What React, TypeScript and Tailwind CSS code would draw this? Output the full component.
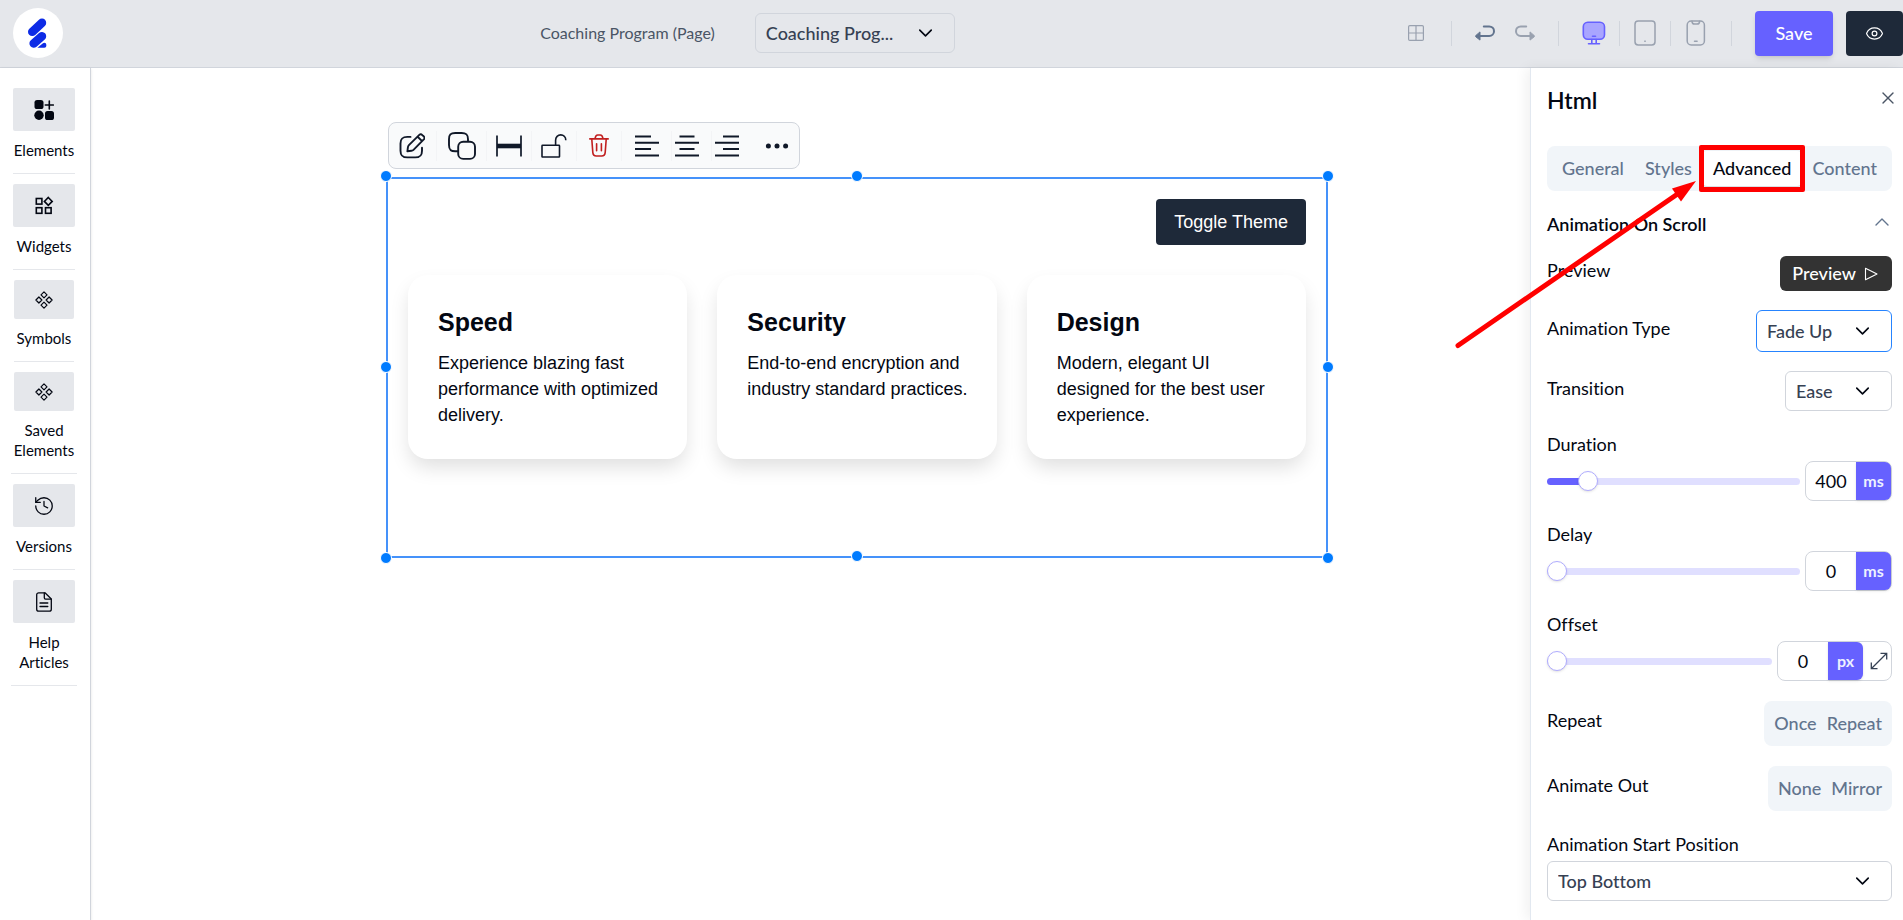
import React, { useState } from 'react';
import { ChevronDown, ChevronUp, X, Eye, History } from 'lucide-react';

type IconProps = { className?: string };

function Logo() {
  return (
    <svg viewBox="0 0 50 50" className="size-[50px]" aria-hidden="true">
      <circle cx="25" cy="25" r="25" fill="#fff" />
      <g stroke="#0d2be6" strokeWidth="8.6" strokeLinecap="round">
        <path d="M19.3 23.8 28.9 14.8" />
        <path d="M20.7 35.4 28.9 28.2" />
      </g>
      <path d="M24.4 39.7 29.6 35.4c1.8-1.3 3.7-.4 3.7 1.5v.8c0 1.2-.8 2-2 2z" fill="#0d2be6" />
    </svg>
  );
}

function ElementsIcon() {
  return (
    <svg viewBox="0 0 20 20" className="size-5" fill="currentColor" aria-hidden="true">
      <rect x="0.5" y="0" width="9" height="9" rx="2.6" />
      <circle cx="5" cy="15.2" r="4.7" />
      <rect x="11" y="11" width="9" height="9" rx="2.6" />
      <path d="M15.3 1v8M11.3 5h8" stroke="currentColor" strokeWidth="1.6" strokeLinecap="round" />
    </svg>
  );
}

function WidgetsIcon() {
  return (
    <svg viewBox="0 0 20 20" className="size-5" fill="none" stroke="currentColor" strokeWidth="1.6" aria-hidden="true">
      <rect x="2.3" y="2.5" width="5.6" height="5.6" />
      <rect x="2.3" y="11.7" width="5.6" height="5.6" />
      <rect x="11.5" y="11.7" width="5.6" height="5.6" />
      <path d="M14.3 1.5 18.2 5.4 14.3 9.3 10.4 5.4z" />
    </svg>
  );
}

function SymbolsIcon() {
  return (
    <svg viewBox="0 0 18 18" className="size-[18px]" fill="none" stroke="currentColor" strokeWidth="1.2" strokeLinejoin="round" aria-hidden="true">
      <path d="M9 .9 12 3.9 9 6.9 6 3.9zM9 11.1 12 14.1 9 17.1 6 14.1zM3.9 6 6.9 9 3.9 12 .9 9zM14.1 6 17.1 9 14.1 12 11.1 9z" />
    </svg>
  );
}

function VersionsIcon() {
  return <History className="size-[22px]" strokeWidth={1.4} aria-hidden="true" />;
}

function ArticleIcon() {
  return (
    <svg viewBox="0 0 18 20" className="h-5 w-[18px]" fill="none" stroke="currentColor" strokeWidth="1.3" strokeLinejoin="round" strokeLinecap="round" aria-hidden="true">
      <path d="M10 .8H3.7a2 2 0 0 0-2 2v14.4a2 2 0 0 0 2 2h10.6a2 2 0 0 0 2-2V7z" />
      <path d="M9.3 1v4.8a1.3 1.3 0 0 0 1.3 1.3h5.5M5 11h7.8M5 14.5h7.8" />
    </svg>
  );
}

function EditIcon() {
  return (
    <svg viewBox="0 0 26 26" className="size-[26px]" fill="none" stroke="currentColor" strokeWidth="1.9" strokeLinejoin="round" strokeLinecap="round" aria-hidden="true">
      <path d="M11.5 3.9H8.3C3.5 3.9 1.5 5.5 1.5 10.5v7.2c0 5 2 6.7 6.8 6.7h7.9c4.8 0 6.8-1.7 6.8-6.7v-3" />
      <path d="M20.3 1.9 9.9 12.2c-.5.5-.9 1.4-1 2.1L8.4 18.3l4-.5c.7-.1 1.6-.5 2.1-1L24.8 6.4c1.8-1.8 0-2.9-1.2-4.1s-2-1.7-3.3-.4zM18.6 3.7l4.5 4.4" />
    </svg>
  );
}

function CopyIcon() {
  return (
    <svg viewBox="0 0 28 28" className="size-7" fill="none" stroke="currentColor" strokeWidth="1.9" aria-hidden="true">
      <path d="M10.2 19.3H7.3C2.5 19.3 1 17.7 1 12.9V7.3C1 2.5 2.5 1 7.3 1h6.3C18.4 1 20 2.5 20 7.3v2.4" />
      <rect x="10.2" y="9.8" width="16.8" height="17.1" rx="5" />
    </svg>
  );
}

function WidthIcon() {
  return (
    <svg viewBox="0 0 26 22" className="h-[22px] w-[26px]" fill="none" stroke="currentColor" aria-hidden="true">
      <path d="M1 .5v21M25 .5v21" strokeWidth="1.7" />
      <path d="M1 11h24" strokeWidth="4.6" />
    </svg>
  );
}

function UnlockIcon() {
  return (
    <svg viewBox="0 0 26 24" className="h-6 w-[26px]" fill="none" stroke="currentColor" strokeWidth="1.6" aria-hidden="true">
      <rect x="1" y="11.3" width="17.5" height="11.7" rx=".6" />
      <path d="M14.6 11.3V6.2c0-3.1 2.3-5.3 5.1-5.3s5.1 2.2 5.1 5.3" />
    </svg>
  );
}

function TrashIcon() {
  return (
    <svg viewBox="0 0 20 23" className="h-[23px] w-5 text-[#c11f1f]" fill="none" stroke="currentColor" strokeWidth="1.6" strokeLinecap="round" aria-hidden="true">
      <path d="M.8 4.9h18.4M2.8 5.2l1 13.2c.2 2.3 1 3.6 3.5 3.6h5.4c2.5 0 3.3-1.3 3.5-3.6l1-13.2M6 4.6c.4-2.3.9-3.6 2.7-3.6h2.6c1.8 0 2.3 1.3 2.7 3.6M7.6 9.8v7M12.4 9.8v7" />
    </svg>
  );
}

function AlignIcon({ d }: { d: string }) {
  return (
    <svg viewBox="0 0 24 22" className="h-[22px] w-6" fill="none" stroke="currentColor" strokeWidth="2" aria-hidden="true">
      <path d={d} />
    </svg>
  );
}

function MoreIcon() {
  return (
    <svg viewBox="0 0 24 6" className="h-1.5 w-6" fill="currentColor" aria-hidden="true">
      <circle cx="3.4" cy="3" r="2.5" />
      <circle cx="12" cy="3" r="2.5" />
      <circle cx="20.6" cy="3" r="2.5" />
    </svg>
  );
}

function GridIcon() {
  return (
    <svg viewBox="0 0 16 16" className="size-4" fill="none" stroke="currentColor" strokeWidth="1.2" aria-hidden="true">
      <rect x=".6" y=".6" width="14.8" height="14.8" rx="1.2" />
      <path d="M8 .6v14.8M.6 8h14.8" />
    </svg>
  );
}

function UndoIcon({ className = '' }: IconProps) {
  return (
    <svg viewBox="0 0 20 17" className={'h-[17px] w-5 ' + className} fill="none" stroke="currentColor" strokeWidth="2" strokeLinecap="round" aria-hidden="true">
      <path d="M8.8 1.5h5.4c2.7 0 4.8 2 4.8 4.7s-2.1 4.8-4.8 4.8H5" />
      <path d="M5 7.3v7.8L.8 11.8c-.5-.4-.5-.9 0-1.3z" fill="currentColor" strokeWidth="1" strokeLinejoin="round" />
    </svg>
  );
}

function MonitorIcon() {
  return (
    <svg viewBox="0 0 24 24" className="size-6" fill="none" stroke="#6661ff" strokeWidth="1.6" strokeLinecap="round" aria-hidden="true">
      <rect x="1.3" y="1.3" width="21.2" height="17" rx="4.5" fill="#a9a5ff" />
      <path d="M10.5 15.2h3M9.8 18.5v4M14.2 18.5v4M6.5 22.7h11" />
    </svg>
  );
}

function TabletIcon() {
  return (
    <svg viewBox="0 0 22 26" className="h-[26px] w-[22px]" fill="none" stroke="currentColor" strokeWidth="1.5" aria-hidden="true">
      <rect x="1" y="1" width="20" height="24" rx="3.2" />
      <path d="M11 20.5v1.5" />
    </svg>
  );
}

function PhoneIcon() {
  return (
    <svg viewBox="0 0 20 26" className="h-[26px] w-5" fill="none" stroke="currentColor" strokeWidth="1.5" strokeLinecap="round" aria-hidden="true">
      <rect x="1.2" y="1" width="17.2" height="24" rx="4" />
      <path d="M6 1.2c0 2.2 1 2.9 2.5 2.9h2.6c1.5 0 2.5-.7 2.5-2.9M8.5 21.2h2.6" />
    </svg>
  );
}

function PlayIcon() {
  return (
    <svg viewBox="0 0 14 14" className="size-3.5" fill="none" stroke="currentColor" strokeWidth="1.1" strokeLinejoin="round" aria-hidden="true">
      <path d="M1.5 1.2v11.6L13 7z" />
    </svg>
  );
}

function ExpandIcon() {
  return (
    <svg viewBox="0 0 18 18" className="size-[18px]" fill="none" stroke="currentColor" strokeWidth="1.3" aria-hidden="true">
      <path d="M1.5 16.5l15-15M10.5 1.3h6.2v6.2M7.5 16.7H1.3v-6.2" />
    </svg>
  );
}

const navItems = [
  { label: 'Elements', icon: <ElementsIcon />, size: 'h-[43px] px-[21px]' },
  { label: 'Widgets', icon: <WidgetsIcon />, size: 'h-[43px] px-[21px]' },
  { label: 'Symbols', icon: <SymbolsIcon />, size: 'h-[39px] px-[21px]' },
  { label: 'Saved Elements', icon: <SymbolsIcon />, size: 'h-[39px] px-[21px]' },
  { label: 'Versions', icon: <VersionsIcon />, size: 'h-[43px] px-5' },
  { label: 'Help Articles', icon: <ArticleIcon />, size: 'h-[43px] px-[22px]' },
];

function Sidebar() {
  return (
    <nav className="flex w-[91px] shrink-0 flex-col items-center gap-2.5 border-r border-gray-300 pt-5 pr-0.5 shadow-sm">
      {navItems.map((item) => (
        <div key={item.label} className="flex max-w-[66px] flex-col items-center border-b border-gray-200 pb-[13px]">
          <button type="button" className="flex flex-col items-center gap-[9px]">
            <span className={'flex items-center rounded-xs bg-gray-200 ' + item.size}>{item.icon}</span>
            <span className="text-center text-[15px] leading-5">{item.label}</span>
          </button>
        </div>
      ))}
    </nav>
  );
}

function Divider() {
  return <span className="h-[25px] w-px bg-gray-300" />;
}

type SelectBoxProps = { id: string; value: string; className?: string; wrap?: string };

function SelectBox({ id, value, className = '', wrap = '' }: SelectBoxProps) {
  return (
    <div className={'relative ' + wrap}>
      <select
        id={id}
        defaultValue={value}
        className={'block w-full appearance-none rounded-md border bg-transparent pr-[58px] pl-2.5 text-[18px] font-medium text-gray-700 outline-none ' + className}
      >
        <option>{value}</option>
      </select>
      <ChevronDown className="pointer-events-none absolute top-1/2 right-[18px] size-[23px] -translate-y-1/2" strokeWidth={1.7} aria-hidden="true" />
    </div>
  );
}

function Header() {
  return (
    <header className="flex h-[68px] shrink-0 items-center border-b border-gray-300 bg-gray-200 pb-px pl-[13px]">
      <a href="#home" aria-label="Home">
        <Logo />
      </a>
      <div className="mx-auto flex items-center gap-10 pl-6">
        <label htmlFor="page" className="text-base text-gray-600">
          Coaching Program (Page)
        </label>
        <SelectBox id="page" value="Coaching Prog..." wrap="w-[200px]" className="h-10 border-gray-300" />
      </div>
      <div className="flex items-center text-gray-400">
        <button type="button" aria-label="Grid" className="mr-[27px]">
          <GridIcon />
        </button>
        <Divider />
        <button type="button" aria-label="Undo" className="mr-5 ml-[23px] text-slate-500">
          <UndoIcon />
        </button>
        <button type="button" aria-label="Redo" className="mr-[23px]">
          <UndoIcon className="-scale-x-100" />
        </button>
        <Divider />
        <button type="button" aria-label="Desktop" className="mr-[13px] ml-[23px]">
          <MonitorIcon />
        </button>
        <Divider />
        <button type="button" aria-label="Tablet" className="mx-3.5">
          <TabletIcon />
        </button>
        <Divider />
        <button type="button" aria-label="Phone" className="mr-[25px] ml-[15px]">
          <PhoneIcon />
        </button>
        <Divider />
        <button type="button" className="ml-[23px] h-[45px] w-[78px] rounded-sm bg-[#6661ff] text-[18px] font-medium text-white shadow-md">
          Save
        </button>
        <button type="button" aria-label="Preview page" className="ml-[13px] flex h-[45px] w-[57px] items-center justify-center rounded-sm bg-gray-800 text-white">
          <Eye className="size-[19px]" strokeWidth={1.5} />
        </button>
      </div>
    </header>
  );
}

const tools = [
  { label: 'Edit', icon: <EditIcon />, cell: 'w-12 border-r pr-0.5' },
  { label: 'Duplicate', icon: <CopyIcon />, cell: 'w-[50px] border-r' },
  { label: 'Full width', icon: <WidthIcon />, cell: 'w-[45px] border-r' },
  { label: 'Unlock', icon: <UnlockIcon />, cell: 'w-[45px] border-r' },
  { label: 'Delete', icon: <TrashIcon />, cell: 'w-[45px] border-r' },
  { label: 'Align left', icon: <AlignIcon d="M0 1.5h16M0 7.8h24M0 14.1h16M0 20.4h24" />, cell: 'w-[50px] border-r' },
  { label: 'Align center', icon: <AlignIcon d="M4.5 1.5h15M0 7.8h24M4.5 14.1h15M0 20.4h24" />, cell: 'w-10 border-r pr-2.5' },
  { label: 'Align right', icon: <AlignIcon d="M8 1.5h16M0 7.8h24M8 14.1h16M0 20.4h24" />, cell: 'w-8 pr-0.5' },
  { label: 'More', icon: <MoreIcon />, cell: 'w-[55px] pl-2.5' },
];

const handles = [
  '-top-[9px] -left-2',
  '-top-[9px] left-1/2 -ml-1.5',
  '-top-[9px] -right-2',
  'top-1/2 -mt-[7px] -left-2',
  'top-1/2 -mt-[7px] -right-2',
  '-bottom-2 -left-2',
  '-bottom-1.5 left-1/2 -ml-1.5',
  '-bottom-2 -right-2',
];

const cards = [
  { title: 'Speed', text: 'Experience blazing fast performance with optimized delivery.' },
  { title: 'Security', text: 'End-to-end encryption and industry standard practices.' },
  { title: 'Design', text: 'Modern, elegant UI designed for the best user experience.' },
];

function Canvas() {
  return (
    <main className="min-w-0 flex-1 pt-[54px] pr-[202px] pl-[295px]">
      <div className="ml-0.5 flex h-[47px] w-fit items-center rounded-lg border border-gray-300 bg-gray-50 text-gray-900">
        {tools.map((t) => (
          <button key={t.label} type="button" aria-label={t.label} className={'flex h-[30px] items-center justify-center border-gray-100 ' + t.cell}>
            {t.icon}
          </button>
        ))}
      </div>
      <section className="relative mt-2 border-2 border-[#4592fa] px-5 pt-5 pb-[97px] font-['Liberation_Sans',Arial,sans-serif] text-[18px]">
        {handles.map((h) => (
          <span key={h} className={'absolute size-3 rounded-full border border-white bg-[#007bff] ' + h} />
        ))}
        <div className="flex justify-end">
          <button type="button" className="h-[46px] rounded-sm bg-gray-800 px-[18px] text-white">
            Toggle Theme
          </button>
        </div>
        <div className="mt-[30px] grid grid-cols-3 gap-[30px]">
          {cards.map((c) => (
            <article key={c.title} className="rounded-[20px] bg-white pt-[30px] pr-6 pb-[31px] pl-[30px] shadow-[0_10px_20px_-2px_rgba(0,0,0,0.13)]">
              <h3 className="mb-2.5 text-[25px] leading-[35px] font-bold">{c.title}</h3>
              <p className="leading-[26px]">{c.text}</p>
            </article>
          ))}
        </div>
      </section>
    </main>
  );
}

function TabMarker() {
  return (
    <>
      <span className="pointer-events-none absolute -inset-x-1 -inset-y-1.5 rounded-xs border-[5px] border-[#ff0000]" />
      <svg viewBox="0 0 250 180" className="pointer-events-none absolute top-6 -left-[250px] h-[180px] w-[250px]" aria-hidden="true">
        <path d="M5 170.5 226 18" stroke="#ff0000" strokeWidth="5" strokeLinecap="round" />
        <path d="M243 6 219 13.5 222 18 228 26.5z" fill="#ff0000" />
      </svg>
    </>
  );
}

type SliderRowProps = { id: string; label: string; unit: string; initial: number; max: number; expandable?: boolean };

function SliderRow({ id, label, unit, initial, max, expandable }: SliderRowProps) {
  const [value, setValue] = useState(initial);
  const share = value / max;
  const stop = `calc(${share * 100}% + ${10 - share * 20}px)`;
  return (
    <div className="mt-5">
      <label htmlFor={id} className="block h-[30px] leading-[26px]">
        {label}
      </label>
      <div className="flex items-center gap-[5px]">
        <input
          id={id}
          type="range"
          min={0}
          max={max}
          value={value}
          onChange={(e) => setValue(Number(e.target.value))}
          className="h-[7px] min-w-0 flex-1 appearance-none rounded-full [&::-webkit-slider-thumb]:size-5 [&::-webkit-slider-thumb]:appearance-none [&::-webkit-slider-thumb]:rounded-full [&::-webkit-slider-thumb]:border [&::-webkit-slider-thumb]:border-solid [&::-webkit-slider-thumb]:border-[#b0acff] [&::-webkit-slider-thumb]:bg-white [&::-webkit-slider-thumb]:shadow-sm"
          style={{ background: `linear-gradient(to right, #6661ff ${value ? stop : '0px'}, #e0dfff ${value ? stop : '0px'})` }}
        />
        <div className="flex h-10 items-stretch rounded-lg border border-gray-300">
          <input
            type="text"
            aria-label={label + ' value'}
            value={value}
            onChange={(e) => setValue(Number(e.target.value) || 0)}
            className="w-[50px] bg-transparent text-center outline-none"
          />
          <button type="button" className="w-[35px] rounded-r-md bg-[#6661ff] text-base font-bold text-indigo-50 shadow-sm">
            {unit}
          </button>
          {expandable && (
            <button type="button" aria-label="Expand" className="flex w-7 items-center justify-center pl-1 text-gray-700">
              <ExpandIcon />
            </button>
          )}
        </div>
      </div>
    </div>
  );
}

function ToggleRow({ label, options }: { label: string; options: string[] }) {
  return (
    <div role="group" aria-label={label} className="mt-5 flex h-[45px] justify-between">
      <span className="leading-[38px]">{label}</span>
      <div className="flex items-center rounded-lg bg-slate-100 px-[5px] font-medium text-slate-500">
        {options.map((o) => (
          <button key={o} type="button" className="px-[5px]">
            {o}
          </button>
        ))}
      </div>
    </div>
  );
}

const tabs = ['General', 'Styles', 'Advanced', 'Content'];

function Panel() {
  return (
    <aside className="w-[373px] shrink-0 border-l border-slate-200 pr-[11px] pb-4 pl-4 text-[18px] shadow-[-4px_0_12px_rgba(0,0,0,0.06)]">
      <div className="flex h-[78px] items-center justify-between pb-3.5">
        <h2 className="text-[23px] font-semibold">Html</h2>
        <button type="button" aria-label="Close" className="-mr-1.5 mb-1 text-gray-600">
          <X className="size-5" strokeWidth={1.6} />
        </button>
      </div>
      <div role="tablist" className="flex h-[45px] items-center justify-between rounded-lg bg-slate-100 p-[5px] font-medium text-slate-500">
        {tabs.map((t) =>
          t === 'Advanced' ? (
            <div key={t} className="relative">
              <button type="button" role="tab" aria-selected="true" className="h-[35px] rounded-sm bg-white px-2.5 text-gray-950 shadow-sm">
                {t}
              </button>
              <TabMarker />
            </div>
          ) : (
            <button key={t} type="button" role="tab" aria-selected="false" className="h-[35px] px-2.5">
              {t}
            </button>
          ),
        )}
      </div>
      <div className="mt-5 flex h-[26px] items-center justify-between">
        <h3 className="font-semibold">Animation On Scroll</h3>
        <button type="button" aria-label="Collapse" className="-mr-0.5 mb-1 text-slate-500">
          <ChevronUp className="size-6" strokeWidth={1.4} />
        </button>
      </div>
      <div className="mt-[19px] flex h-[35px] justify-between">
        <span className="leading-7">Preview</span>
        <button type="button" className="flex items-center gap-2 rounded-md bg-[#333] pr-3.5 pl-3 font-medium text-white">
          Preview
          <PlayIcon />
        </button>
      </div>
      <div className="mt-[19px] flex h-[42px] justify-between">
        <label htmlFor="animation-type" className="leading-9">Animation Type</label>
        <SelectBox id="animation-type" value="Fade Up" className="h-[42px] border-[#2684ff]" />
      </div>
      <div className="mt-[19px] flex h-10 justify-between">
        <label htmlFor="transition" className="leading-[34px]">Transition</label>
        <SelectBox id="transition" value="Ease" className="h-10 border-gray-300" />
      </div>
      <SliderRow id="duration" label="Duration" unit="ms" initial={400} max={3000} />
      <SliderRow id="delay" label="Delay" unit="ms" initial={0} max={3000} />
      <SliderRow id="offset" label="Offset" unit="px" initial={0} max={1000} expandable />
      <ToggleRow label="Repeat" options={['Once', 'Repeat']} />
      <ToggleRow label="Animate Out" options={['None', 'Mirror']} />
      <div className="mt-5">
        <label htmlFor="start-position" className="block h-[30px] leading-[26px]">
          Animation Start Position
        </label>
        <SelectBox id="start-position" value="Top Bottom" className="h-10 border-gray-300" />
      </div>
    </aside>
  );
}

export default function App() {
  return (
    <div className="flex min-h-screen flex-col bg-white font-['Lato',sans-serif] text-gray-950 [font-variant-ligatures:none]">
      <Header />
      <div className="flex flex-1">
        <Sidebar />
        <Canvas />
        <Panel />
      </div>
    </div>
  );
}
